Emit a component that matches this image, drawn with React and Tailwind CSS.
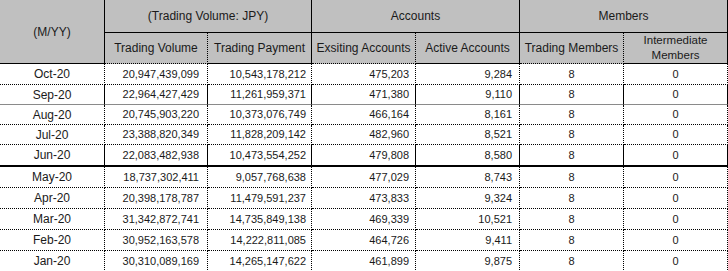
import React from 'react';

const rows = [
    ["Oct-20", "20,947,439,099", "10,543,178,212", "475,203", "9,284", "8", "0"],
    ["Sep-20", "22,964,427,429", "11,261,959,371", "471,380", "9,110", "8", "0"],
    ["Aug-20", "20,745,903,220", "10,373,076,749", "466,164", "8,161", "8", "0"],
    ["Jul-20", "23,388,820,349", "11,828,209,142", "482,960", "8,521", "8", "0"],
    ["Jun-20", "22,083,482,938", "10,473,554,252", "479,808", "8,580", "8", "0"],
    ["May-20", "18,737,302,411", "9,057,768,638", "477,029", "8,743", "8", "0"],
    ["Apr-20", "20,398,178,787", "11,479,591,237", "473,833", "9,324", "8", "0"],
    ["Mar-20", "31,342,872,741", "14,735,849,138", "469,339", "10,521", "8", "0"],
    ["Feb-20", "30,952,163,578", "14,222,811,085", "464,726", "9,411", "8", "0"],
    ["Jan-20", "30,310,089,169", "14,265,147,622", "461,899", "9,875", "8", "0"],
];

const rowLine = (i) => {
    if (i === 1) return "border-b border-solid border-b-[#8a8a8a]";
    if (i === 4) return "border-b-2 border-solid border-b-black";
    return "border-b border-dotted border-b-black";
};

const rowHeight = (i) => {
    if (i === 0) return "h-[21px]";
    if (i < 4) return "h-[20px]";
    if (i === 4) return "h-[22px]";
    return "h-[21px]";
};

const App = () => {
    return (
        <div className="w-[728px] h-[271px] bg-white overflow-hidden font-['Liberation_Sans',Arial,sans-serif] text-[#1a1a1a]">
            <table className="table-fixed border-separate border-spacing-0 w-[728px]">
                <colgroup>
                    <col className="w-[105px]" />
                    <col className="w-[103px]" />
                    <col className="w-[104px]" />
                    <col className="w-[104px]" />
                    <col className="w-[104px]" />
                    <col className="w-[104px]" />
                    <col className="w-[104px]" />
                </colgroup>
                <thead className="bg-[#c0c0c0] text-[12px] font-normal">
                    <tr className="h-[33px]">
                        <th rowSpan={2} className="font-normal border-r border-b border-solid border-black p-0">(M/YY)</th>
                        <th colSpan={2} className="font-normal border-r border-solid border-r-black border-b border-b-black border-b-dotted p-0">(Trading Volume: JPY)</th>
                        <th colSpan={2} className="font-normal border-r border-solid border-r-black border-b border-b-black border-b-dotted p-0">Accounts</th>
                        <th colSpan={2} className="font-normal border-r border-solid border-r-black border-b border-b-black border-b-dotted p-0">Members</th>
                    </tr>
                    <tr className="h-[30px]">
                        <th className="font-normal border-r border-dotted border-r-black border-b border-b-solid border-b-black p-0">Trading Volume</th>
                        <th className="font-normal border-r border-solid border-black border-b p-0">Trading Payment</th>
                        <th className="font-normal border-r border-dotted border-r-black border-b border-b-solid border-b-black p-0">Exsiting Accounts</th>
                        <th className="font-normal border-r border-solid border-black border-b p-0">Active Accounts</th>
                        <th className="font-normal border-r border-dotted border-r-black border-b border-b-solid border-b-black p-0">Trading Members</th>
                        <th className="font-normal border-r border-solid border-black border-b p-0 leading-[15px] text-[11.5px]">Intermediate<br />Members</th>
                    </tr>
                </thead>
                <tbody className="text-[11px] leading-none">
                    {rows.map((r, i) => (
                        <tr key={r[0]} className={rowHeight(i)}>
                            <td className={`${rowLine(i)} border-r border-r-solid border-r-black text-center text-[12px] p-0`}>{r[0]}</td>
                            <td className={`${rowLine(i)} border-r border-r-dotted border-r-black text-right pr-[8px] p-0`}>{r[1]}</td>
                            <td className={`${rowLine(i)} border-r border-r-solid border-r-black text-right pr-[5px] p-0`}>{r[2]}</td>
                            <td className={`${rowLine(i)} border-r border-r-dotted border-r-black text-right pr-[6px] p-0`}>{r[3]}</td>
                            <td className={`${rowLine(i)} border-r border-r-solid border-r-black text-right pr-[7px] p-0`}>{r[4]}</td>
                            <td className={`${rowLine(i)} border-r border-r-dotted border-r-black text-center p-0`}>{r[5]}</td>
                            <td className={`${rowLine(i)} border-r border-r-solid border-r-black text-center p-0`}>{r[6]}</td>
                        </tr>
                    ))}
                </tbody>
            </table>
        </div>
    );
};

export default App;
